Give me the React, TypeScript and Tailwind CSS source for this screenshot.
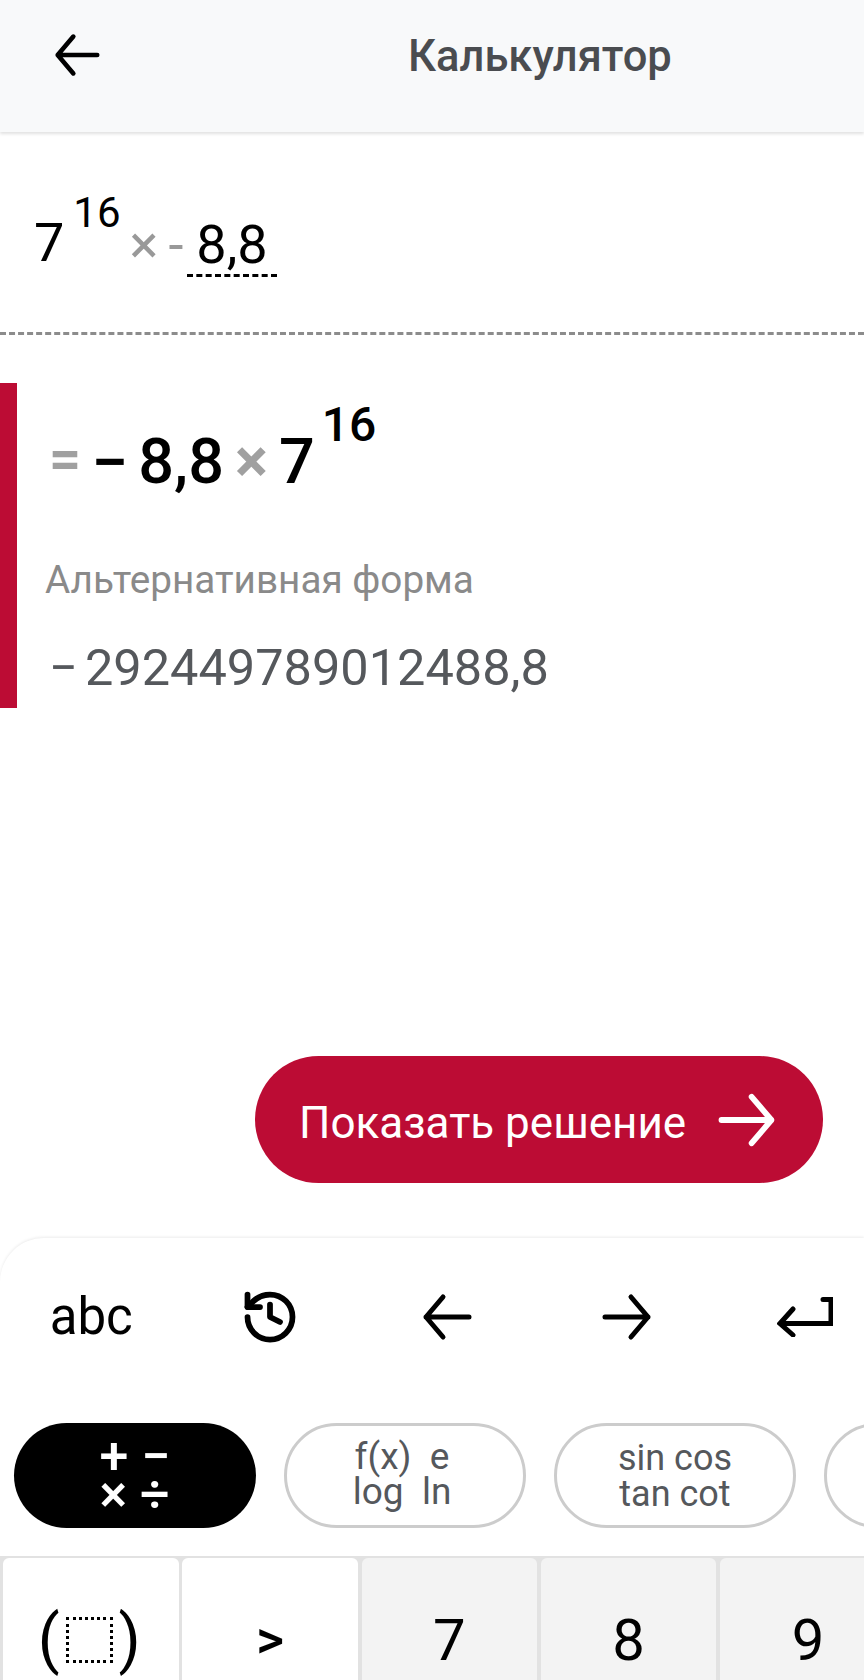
import React from 'react';

const RED = 'bg-[#bc0c34]';

const ArrowLeft = ({ className }: { className: string }) => (
  <svg viewBox="0 0 50 50" fill="none" stroke="currentColor" strokeWidth="5" strokeLinecap="round" strokeLinejoin="round" className={className}>
    <path d="M47 25H4M21 5L4 25l17 20" />
  </svg>
);

const ArrowRight = ({ className }: { className: string }) => (
  <svg viewBox="0 0 50 50" fill="none" stroke="currentColor" strokeWidth="5" strokeLinecap="round" strokeLinejoin="round" className={className}>
    <path d="M3 25h43M29 5l17 20-17 20" />
  </svg>
);

const EnterIcon = () => (
  <svg viewBox="0 0 56 40" fill="none" stroke="currentColor" strokeWidth="5" strokeLinecap="round" className="w-[56px] h-[40px] text-black">
    <path d="M46 2.5h8v24H4M16 12L3 26.5 16 38" />
  </svg>
);

const HistoryIcon = () => (
  <svg viewBox="0 0 24 24" fill="none" stroke="currentColor" strokeWidth="2.3" strokeLinecap="round" strokeLinejoin="round" className="w-[60px] h-[60px] text-black">
    <path d="M3 12a9 9 0 1 0 9-9 9.75 9.75 0 0 0-6.74 2.74L3 8" />
    <path d="M3 3v5h5" />
    <path d="M12 7v5l4 2" />
  </svg>
);

const keys = [
  { id: 'paren', bg: 'bg-white' },
  { id: 'gt', bg: 'bg-white' },
  { id: '7', bg: 'bg-[#f3f3f3]' },
  { id: '8', bg: 'bg-[#f3f3f3]' },
  { id: '9', bg: 'bg-[#f3f3f3]' },
];

const App = () => {
  return (
    <div className="w-[864px] h-[1680px] overflow-hidden flex flex-col bg-white font-['Roboto',sans-serif]">
      {/* Header */}
      <header className="h-[132px] shrink-0 bg-[#f8f9fa] shadow-[0_2px_3px_rgba(0,0,0,0.12)] relative flex">
        <div className="pl-[54px] pt-[32px]">
          <ArrowLeft className="w-[46px] h-[46px] text-black" />
        </div>
        <h1 className="ml-[308px] pt-[30px] text-[43.5px] leading-[54px] font-medium text-[#4a4c50]">Калькулятор</h1>
      </header>

      {/* Input */}
      <section className="h-[203px] shrink-0 border-b-[3px] border-dashed border-[#8c8c8c] pl-[34px] pt-[60px]">
        <div className="flex items-start h-[90px] text-black">
          <span className="text-[54px] leading-[54px] mt-[24px]">7</span>
          <span className="text-[42px] leading-[42px] ml-[9px]">16</span>
          <span className="text-[54px] leading-[54px] mt-[26px] ml-[9px] text-[#999999]">×</span>
          <span className="text-[54px] leading-[54px] mt-[26px] ml-[10px] text-[#999999]">-</span>
          <span className="text-[54px] leading-[54px] mt-[26px] ml-[4px] px-[9px] h-[59px] border-b-[3px] border-dashed border-black">8,8</span>
        </div>
      </section>

      {/* Result */}
      <section className="mt-[48px] h-[325px] shrink-0 flex">
        <div className={`w-[17px] ${RED}`} />
        <div className="pl-[28px] pt-[18px]">
          <div className="flex items-start h-[100px] text-black">
            <span className="text-[56px] leading-[60px] mt-[28px] ml-[4px] font-bold text-[#a0a0a0]">=</span>
            <span className="text-[66px] leading-[60px] mt-[32px] ml-[10px] font-medium">−</span>
            <span className="text-[63px] leading-[62px] mt-[30px] ml-[10px] font-medium">8,8</span>
            <span className="text-[62px] leading-[60px] mt-[30px] ml-[11px] font-bold text-[#a0a0a0]">×</span>
            <span className="text-[63px] leading-[62px] mt-[30px] ml-[11px] font-medium">7</span>
            <span className="text-[48px] leading-[48px] ml-[7px] font-medium">16</span>
          </div>
          <p className="mt-[57px] text-[38.7px] leading-[44px] text-[#8a8a8a]">Альтернативная форма</p>
          <p className="mt-[38px] ml-[4px] flex text-[50.5px] leading-[56px] text-[#55585c]">
            <span>−</span>
            <span className="ml-[7px]">292449789012488,8</span>
          </p>
        </div>
      </section>

      {/* Button */}
      <div className="flex-1 flex items-end justify-end pr-[41px] pb-[55px]">
        <button className={`w-[568px] h-[127px] rounded-full ${RED} flex items-center pl-[44px] gap-[32px] text-white`}>
          <span className="text-[44px] leading-[52px] pt-[6px]">Показать решение</span>
          <ArrowRight className="w-[58px] h-[58px] text-white" />
        </button>
      </div>

      {/* Keyboard */}
      <section className="h-[442px] shrink-0 rounded-tl-[44px] bg-white shadow-[0_-1px_3px_rgba(0,0,0,0.08)] overflow-hidden">
        <div className="grid grid-cols-[repeat(5,178.5px)] h-[156px] pt-[34px] pl-[2px]">
          <div className="flex items-center justify-center h-[90px] text-[51px] text-black">abc</div>
          <div className="flex items-center justify-center h-[90px]"><HistoryIcon /></div>
          <div className="flex items-center justify-center h-[90px] pr-[2px]"><ArrowLeft className="w-[50px] h-[50px] text-black" /></div>
          <div className="flex items-center justify-center h-[90px]"><ArrowRight className="w-[50px] h-[50px] text-black" /></div>
          <div className="flex items-center justify-center h-[90px]"><EnterIcon /></div>
        </div>

        <div className="flex gap-[28px] pl-[14px] mt-[29px] w-[864px] overflow-hidden">
          <div className="w-[242px] h-[105px] shrink-0 rounded-full bg-black text-white flex flex-col items-center justify-center text-[52px] leading-[38px] font-medium">
            <span className="whitespace-pre">+ −<br />× ÷</span>
          </div>
          <div className="w-[242px] h-[105px] shrink-0 rounded-full border-[3px] border-[#cccccc] text-[#55585c] flex items-center justify-center pr-[6px] pb-[3px] text-[37px] leading-[35px] text-center">
            <span className="whitespace-pre">f(x)  e<br />log  ln</span>
          </div>
          <div className="w-[242px] h-[105px] shrink-0 rounded-full border-[3px] border-[#cccccc] text-[#55585c] flex items-center justify-center text-[36px] leading-[36px] text-center">
            <span>sin cos<br />tan cot</span>
          </div>
          <div className="w-[242px] h-[105px] shrink-0 rounded-full border-[3px] border-[#cccccc]" />
        </div>

        <div className="mt-[28px] w-[904px] h-[170px] bg-[#e2e2e2] pt-[2px] pl-[3px] grid grid-cols-[repeat(5,175.5px)] gap-x-[3.8px]">
          {keys.map(k => (
            <div key={k.id} className={`${k.bg} rounded-t-[6px] flex items-center justify-center pb-[4px] text-black text-[58px] leading-none`}>
              {k.id === 'paren' && (
                <div className="flex items-center pr-[3px]">
                  <span className="text-[64px] leading-none">(</span>
                  <span className="w-[47px] h-[46px] mx-[6px] border-[3px] border-dotted border-black" />
                  <span className="text-[64px] leading-none">)</span>
                </div>
              )}
              {k.id === 'gt' && <span className="text-[54px] font-medium">&gt;</span>}
              {k.id !== 'paren' && k.id !== 'gt' && <span>{k.id}</span>}
            </div>
          ))}
        </div>
      </section>
    </div>
  );
};

export default App;
